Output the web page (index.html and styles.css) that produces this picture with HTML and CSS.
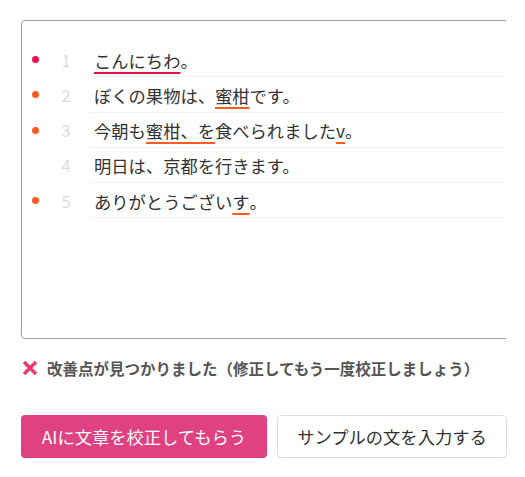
FILE: index.html
```html
<!DOCTYPE html>
<html lang="ja">
<head>
<meta charset="utf-8">
<link rel="stylesheet" href="styles.css">
</head>
<body>
<div class="page">
  <div class="editor-clip">
    <div class="editor">
      <div class="row">
        <span class="dot dot-red"></span>
        <span class="num">1</span>
        <div class="line"><span class="err err-red">こんにちわ</span>。</div>
      </div>
      <div class="row">
        <span class="dot dot-orange"></span>
        <span class="num">2</span>
        <div class="line">ぼくの果物は、<span class="err err-orange">蜜柑</span>です。</div>
      </div>
      <div class="row">
        <span class="dot dot-orange"></span>
        <span class="num">3</span>
        <div class="line">今朝も<span class="err err-orange">蜜柑、を</span>食べられました<span class="err err-orange">v</span>。</div>
      </div>
      <div class="row">
        <span class="dot"></span>
        <span class="num">4</span>
        <div class="line">明日は、京都を行きます。</div>
      </div>
      <div class="row">
        <span class="dot dot-orange"></span>
        <span class="num">5</span>
        <div class="line">ありがとうござい<span class="err err-orange">す</span>。</div>
      </div>
    </div>
  </div>
  <div class="status">
    <svg class="x-icon" width="16" height="16" viewBox="0 0 16 16"><path d="M2 2 L14 14 M14 2 L2 14" stroke="#ef3b66" stroke-width="3.4" stroke-linecap="butt" fill="none"/></svg>
    <span class="status-text">改善点が見つかりました（修正してもう一度校正しましょう）</span>
  </div>
  <div class="buttons">
    <button class="btn btn-primary">AIに文章を校正してもらう</button>
    <button class="btn btn-secondary">サンプルの文を入力する</button>
  </div>
</div>
</body>
</html>
```

FILE: styles.css
```css
html, body {
  margin: 0;
  padding: 0;
  background: #fff;
}
body {
  font-family: "Noto Sans CJK JP", "Noto Sans", sans-serif;
  color: #333;
}
.page {
  padding: 20px 0 0 21px;
}
.editor-clip {
  width: 485px;
  overflow: hidden;
}
.editor {
  width: 520px;
  height: 319px;
  box-sizing: border-box;
  border: 1px solid #9e9e9e;
  border-radius: 4px;
  padding-top: 21px;
}
.row {
  display: flex;
  align-items: center;
  height: 35.25px;
}
.dot {
  width: 7px;
  height: 7px;
  border-radius: 50%;
  margin-left: 10px;
  flex: none;
}
.dot-red { background: #f0124e; }
.dot-orange { background: #ff5a1f; }
.num {
  width: 30px;
  margin-left: 12px;
  text-align: center;
  font-size: 16.5px;
  color: #dcdcdc;
  flex: none;
}
.line {
  flex: 1;
  height: 100%;
  box-sizing: border-box;
  border-bottom: 1px solid #f1f1f1;
  margin-left: 9px;
  padding-left: 4px;
  display: flex;
  align-items: center;
  font-size: 17.3px;
  color: #333;
  white-space: nowrap;
  padding-top: 2px;
}
.err {
  text-decoration: underline;
  text-decoration-thickness: 1.6px;
  text-underline-offset: 4px;
}
.err-red { text-decoration-color: #e3174c; }
.err-orange { text-decoration-color: #ff5a1f; }
.status {
  display: flex;
  align-items: center;
  margin-top: 19px;
  height: 20px;
}
.x-icon {
  margin-left: 1px;
  flex: none;
}
.status-text {
  margin-left: 9px;
  font-size: 15.5px;
  font-weight: bold;
  color: #555;
}
.buttons {
  display: flex;
  gap: 10px;
  margin-top: 37px;
}
.btn {
  height: 43px;
  font-family: "Noto Sans CJK JP", "Noto Sans", sans-serif;
  font-size: 17.3px;
  border-radius: 4px;
  padding: 0 19px;
  cursor: pointer;
}
.btn-primary {
  width: 246px;
  background: #df4183;
  color: #fff;
  border: none;
}
.btn-secondary {
  width: 230px;
  background: #fff;
  color: #333;
  border: 1px solid #dcdcdc;
}
```
